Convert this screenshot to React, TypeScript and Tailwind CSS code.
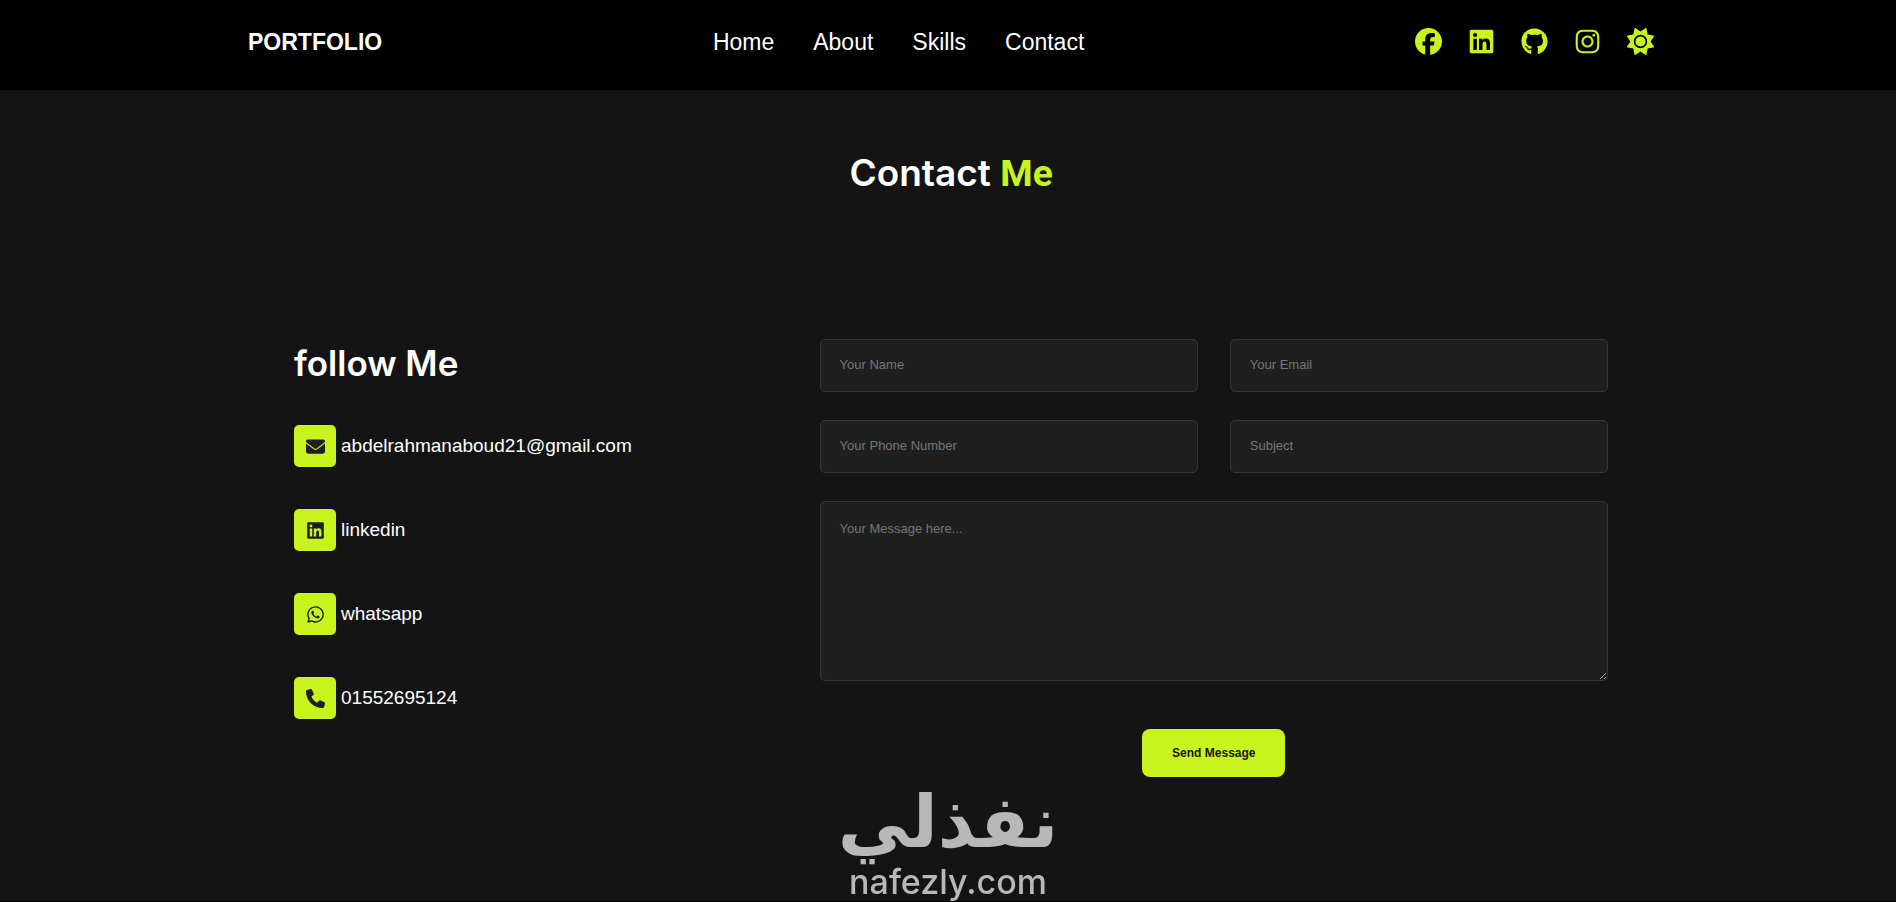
import React, { useState } from "react";
import {
  FaEnvelope,
  FaFacebook,
  FaGithub,
  FaInstagram,
  FaLinkedin,
  FaPhone,
  FaSun,
  FaWhatsapp,
} from "react-icons/fa6";

const navLinks = ["Home", "About", "Skills", "Contact"];

const socials = [
  { label: "Facebook", icon: FaFacebook },
  { label: "LinkedIn", icon: FaLinkedin },
  { label: "GitHub", icon: FaGithub },
  { label: "Instagram", icon: FaInstagram },
];

const contacts = [
  {
    text: "abdelrahmanaboud21@gmail.com",
    href: "mailto:abdelrahmanaboud21@gmail.com",
    icon: FaEnvelope,
  },
  { text: "linkedin", href: "#linkedin", icon: FaLinkedin },
  { text: "whatsapp", href: "#whatsapp", icon: FaWhatsapp },
  { text: "01552695124", href: "tel:01552695124", icon: FaPhone },
];

const fields = [
  { name: "name", type: "text", placeholder: "Your Name" },
  { name: "email", type: "email", placeholder: "Your Email" },
  { name: "phone", type: "tel", placeholder: "Your Phone Number" },
  { name: "subject", type: "text", placeholder: "Subject" },
];

const fieldClass =
  "block w-full rounded-[5px] border border-[#353535] bg-[#1f1f1f] px-[19px] text-[13px] text-white outline-none placeholder:text-[#757575]";

function Header() {
  return (
    <header className="bg-black pl-1.5">
      <div className="mx-auto flex h-[90px] max-w-[1406px] items-start justify-between pt-[26px]">
        <a href="#home" className="text-[23px] leading-8 font-bold">
          PORTFOLIO
        </a>
        <nav className="flex gap-[39px]">
          {navLinks.map((link) => (
            <a
              key={link}
              href={`#${link.toLowerCase()}`}
              className="text-[23px] leading-8"
            >
              {link}
            </a>
          ))}
        </nav>
        <div className="flex h-[30px] items-center gap-[26px] text-[#c9f31d]">
          {socials.map(({ label, icon: Icon }) => (
            <a key={label} href="#social" aria-label={label}>
              <Icon className="h-[27px] w-auto" />
            </a>
          ))}
          <button type="button" aria-label="Toggle theme">
            <FaSun className="h-[27px] w-auto" />
          </button>
        </div>
      </div>
    </header>
  );
}

function ContactForm() {
  const [message, setMessage] = useState("");

  return (
    <form className="flex-1" onSubmit={(e) => e.preventDefault()}>
      <div className="grid grid-cols-2 gap-x-8 gap-y-7">
        {fields.map((field) => (
          <input
            key={field.name}
            name={field.name}
            type={field.type}
            aria-label={field.placeholder}
            placeholder={field.placeholder}
            className={`${fieldClass} h-[53px] pb-0.5`}
          />
        ))}
        <textarea
          name="message"
          aria-label="Your Message"
          placeholder="Your Message here..."
          value={message}
          onChange={(e) => setMessage(e.target.value)}
          className={`${fieldClass} col-span-2 h-[180px] resize pt-[17px]`}
        />
      </div>
      <div className="mt-12 flex justify-center">
        <button
          type="submit"
          className="h-12 rounded-lg bg-[#c9f31d] px-[30px] text-xs font-bold text-[#141414]"
        >
          Send Message
        </button>
      </div>
    </form>
  );
}

export default function App() {
  return (
    <div className="flex min-h-screen flex-col bg-[#141414] font-['Liberation_Sans',Arial,sans-serif] text-white">
      <Header />

      <main className="flex-1 pl-1.5">
        <h1 className="pt-[58px] text-center font-[Inter,sans-serif] text-[37px] leading-[50px] font-semibold">
          Contact{" "}
          <span className="font-[Roboto,sans-serif] font-bold text-[#c9f31d]">
            Me
          </span>
        </h1>

        <section className="mx-auto mt-[140px] flex max-w-[1314px] items-start">
          <div className="w-[40%]">
            <h2 className="font-[Inter,sans-serif] text-[35px] leading-[48px] font-semibold">
              follow Me
            </h2>
            <ul className="mt-[38px] flex flex-col gap-[42px]">
              {contacts.map(({ text, href, icon: Icon }) => (
                <li key={text}>
                  <a href={href} className="flex items-center gap-[5px]">
                    <span className="flex size-[42px] items-center justify-center rounded-[5px] bg-[#c9f31d] text-[#1f1f1f]">
                      <Icon className="h-[19px] w-auto" />
                    </span>
                    <span className="text-[19px]">{text}</span>
                  </a>
                </li>
              ))}
            </ul>
          </div>
          <ContactForm />
        </section>
      </main>

      <footer className="h-px bg-black" />

      <div className="pointer-events-none fixed bottom-0 left-1/2 flex -translate-x-1/2 flex-col items-center pb-0.5 text-[#b8b8b8]">
        <span
          lang="ar"
          dir="rtl"
          className="font-['DejaVu_Sans',sans-serif] text-[72px] leading-[84px] font-bold"
        >
          نفذلي
        </span>
        <span className="font-[Inter,sans-serif] text-[34px] leading-[36px] font-medium">
          nafezly.com
        </span>
      </div>
    </div>
  );
}
